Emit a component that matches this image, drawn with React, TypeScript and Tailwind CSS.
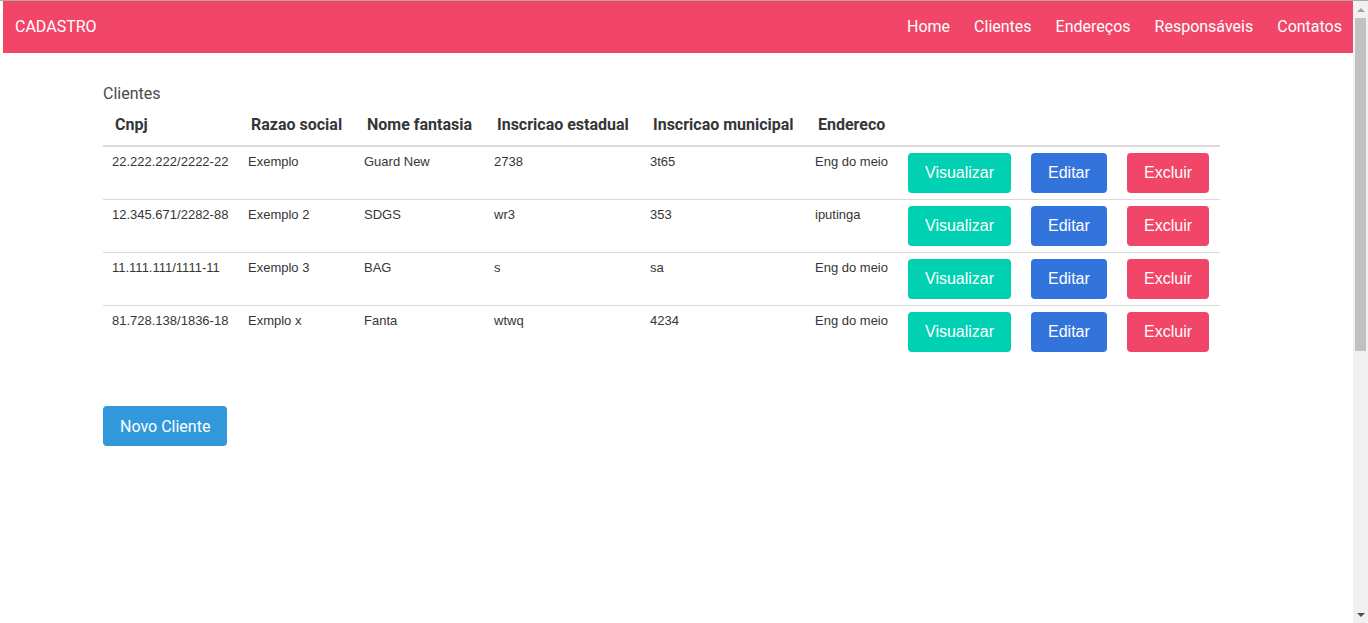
const navItems = ['Home', 'Clientes', 'Endereços', 'Responsáveis', 'Contatos']

type Cliente = {
  cnpj: string
  razao: string
  fantasia: string
  estadual: string
  municipal: string
  endereco: string
}

const clientes: Cliente[] = [
  { cnpj: '22.222.222/2222-22', razao: 'Exemplo', fantasia: 'Guard New', estadual: '2738', municipal: '3t65', endereco: 'Eng do meio' },
  { cnpj: '12.345.671/2282-88', razao: 'Exemplo 2', fantasia: 'SDGS', estadual: 'wr3', municipal: '353', endereco: 'iputinga' },
  { cnpj: '11.111.111/1111-11', razao: 'Exemplo 3', fantasia: 'BAG', estadual: 's', municipal: 'sa', endereco: 'Eng do meio' },
  { cnpj: '81.728.138/1836-18', razao: 'Exmplo x', fantasia: 'Fanta', estadual: 'wtwq', municipal: '4234', endereco: 'Eng do meio' },
]

const headers = ['Cnpj', 'Razao social', 'Nome fantasia', 'Inscricao estadual', 'Inscricao municipal', 'Endereco', '', '', '']
const widths = ['w-[136px]', 'w-[116px]', 'w-[130px]', 'w-[156px]', 'w-[165px]', 'w-[92px]', 'w-[123px]', 'w-[96px]', 'w-[103px]']

function Btn({ label, color }: { label: string; color: string }) {
  return (
    <button
      className={`h-10 px-[17px] rounded text-white text-base leading-6 font-['Liberation_Sans',Arial,sans-serif] whitespace-nowrap ${color}`}
    >
      {label}
    </button>
  )
}

function Scrollbar() {
  return (
    <div className="w-[15px] h-full bg-[#f1f1f1] flex flex-col items-center shrink-0">
      <div className="h-[17px] flex items-center justify-center">
        <div className="w-0 h-0 border-l-[4px] border-r-[4px] border-b-[4px] border-l-transparent border-r-transparent border-b-[#a3a3a3]" />
      </div>
      <div className="w-[11px] h-[333px] bg-[#c1c1c1]" />
      <div className="flex-1" />
      <div className="h-[17px] flex items-center justify-center">
        <div className="w-0 h-0 border-l-[4px] border-r-[4px] border-t-[4px] border-l-transparent border-r-transparent border-t-[#505050]" />
      </div>
    </div>
  )
}

export default function App() {
  return (
    <div className="w-[1368px] h-[623px] overflow-hidden bg-white flex border-t border-[#a9a9a9] font-['Roboto',sans-serif] text-[#4a4a4a]">
      <div className="flex-1 flex flex-col pl-[3px]">
        <nav className="h-[52px] bg-[#f14668] text-white flex items-center justify-between text-base">
          <a className="px-3">CADASTRO</a>
          <div className="flex -mr-px">
            {navItems.map(n => (
              <a key={n} className="px-3">{n}</a>
            ))}
          </div>
        </nav>

        <div className="pl-[100px] pt-[29px]">
          <div className="text-base leading-6">Clientes</div>
          <table className="w-[1117px] table-fixed border-collapse -mt-px">
            <thead>
              <tr className="border-b-2 border-[#dbdbdb]">
                {headers.map((h, i) => (
                  <th key={i} className={`${widths[i]} text-left px-3 py-2 text-base leading-6 font-bold text-[#363636] whitespace-nowrap`}>
                    {h}
                  </th>
                ))}
              </tr>
            </thead>
            <tbody>
              {clientes.map((c, i) => (
                <tr key={c.cnpj} className={i < clientes.length - 1 ? 'border-b border-[#dbdbdb]' : ''}>
                  {[c.cnpj, c.razao, c.fantasia, c.estadual, c.municipal, c.endereco].map((v, j) => (
                    <td key={j} className="align-top px-[9px] py-[6px] text-[13px] leading-[18px] font-['Liberation_Sans',Arial,sans-serif] text-[#363636] whitespace-nowrap">
                      {v}
                    </td>
                  ))}
                  <td className="align-top px-[10px] py-[6px]"><Btn label="Visualizar" color="bg-[#00d1b2]" /></td>
                  <td className="align-top px-[10px] py-[6px]"><Btn label="Editar" color="bg-[#3273dc]" /></td>
                  <td className="align-top px-[10px] py-[6px]"><Btn label="Excluir" color="bg-[#f14668]" /></td>
                </tr>
              ))}
            </tbody>
          </table>

          <button className="mt-12 h-10 pt-[2px] px-[17px] rounded bg-[#3298dc] text-white text-base leading-6">
            Novo Cliente
          </button>
        </div>
      </div>
      <Scrollbar />
    </div>
  )
}
